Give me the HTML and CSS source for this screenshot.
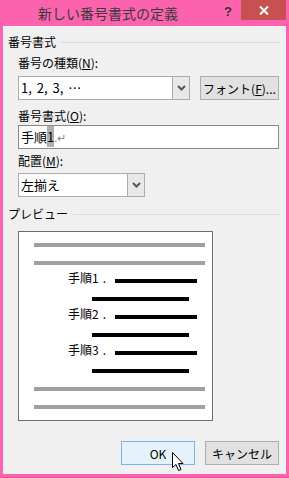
FILE: index.html
```html
<!DOCTYPE html>
<html lang="ja">
<head>
    <meta charset="UTF-8">
    <title>新しい番号書式の定義</title>
    <link rel="stylesheet" href="styles.css">
</head>
<body>
<div class="window">
    <div class="titlebar">
        <span class="title">新しい番号書式の定義</span>
        <span class="help">?</span>
        <span class="close">
            <svg width="10" height="9" viewBox="0 0 10 9"><path d="M1 0.5 L9 8.5 M9 0.5 L1 8.5" stroke="#fff" stroke-width="2"/></svg>
        </span>
    </div>
    <div class="body">
        <div class="group-title">番号書式</div>
        <div class="group">
            <div class="label first">番号の種類(<u>N</u>):</div>
            <div class="row">
                <div class="combo combo-wide">
                    <span class="combo-text">1, 2, 3, …</span>
                    <span class="combo-arrow">
                        <svg width="9" height="6" viewBox="0 0 9 6"><path d="M1 1 L4.5 4.5 L8 1" fill="none" stroke="#555" stroke-width="2"/></svg>
                    </span>
                </div>
                <button class="btn btn-font">フォント(<u>F</u>)...</button>
            </div>
            <div class="label second">番号書式(<u>O</u>):</div>
            <div class="textbox">手順<span class="sel">1</span><span class="mark">.↵</span></div>
            <div class="label third">配置(<u>M</u>):</div>
            <div class="combo combo-narrow">
                <span class="combo-text">左揃え</span>
                <span class="combo-arrow">
                    <svg width="9" height="6" viewBox="0 0 9 6"><path d="M1 1 L4.5 4.5 L8 1" fill="none" stroke="#555" stroke-width="2"/></svg>
                </span>
            </div>
        </div>
        <div class="group-title preview-title">プレビュー</div>
        <div class="preview">
            <div class="line"><span class="bar gray"></span></div>
            <div class="line"><span class="bar gray"></span></div>
            <div class="line step"><span class="step-label">手順1<span class="dot">.</span></span><span class="bar black"></span></div>
            <div class="line"><span class="bar black sub"></span></div>
            <div class="line step"><span class="step-label">手順2<span class="dot">.</span></span><span class="bar black"></span></div>
            <div class="line"><span class="bar black sub"></span></div>
            <div class="line step"><span class="step-label">手順3<span class="dot">.</span></span><span class="bar black"></span></div>
            <div class="line"><span class="bar black sub"></span></div>
            <div class="line"><span class="bar gray"></span></div>
            <div class="line"><span class="bar gray"></span></div>
        </div>
        <div class="actions">
            <button class="btn btn-ok">OK</button>
            <button class="btn btn-cancel">キャンセル</button>
        </div>
    </div>
    <svg class="cursor" width="13" height="20" viewBox="0 0 13 20">
        <path d="M0.5 0.5 L0.5 15.5 L4 12.5 L6.5 18.5 L9 17.5 L6.5 11.5 L11 11.5 Z" fill="#fff" stroke="#000" stroke-width="1" stroke-linejoin="miter"/>
    </svg>
</div>
</body>
</html>
```

FILE: styles.css
```css
* {
    box-sizing: border-box;
}

body {
    margin: 0;
    font-family: "Noto Sans CJK JP", "Noto Sans", sans-serif;
    font-size: 12px;
    color: #000;
}

.window {
    position: relative;
    width: 289px;
    height: 478px;
    background-color: #fc63ae;
    border-bottom: 1px solid #e2519a;
    display: flex;
    flex-direction: column;
}

.titlebar {
    height: 26px;
    display: flex;
    align-items: flex-start;
    flex-shrink: 0;
}

.title {
    margin: 3px 0 0 38px;
    font-size: 14px;
    line-height: 20px;
    color: #3a3a3a;
}

.help {
    margin: 4px 9px 0 auto;
    font-family: "Liberation Sans", sans-serif;
    font-weight: bold;
    font-size: 13px;
    line-height: 16px;
    color: #333;
}

.close {
    width: 45px;
    height: 20px;
    margin-right: 3px;
    background-color: #c75050;
    display: flex;
    align-items: center;
    justify-content: center;
}

.body {
    flex: 1;
    margin: 0 3px 3px 3px;
    background-color: #f0f0f0;
    padding: 8px 7px 0 5px;
}

.group-title {
    display: flex;
    align-items: center;
    height: 16px;
    line-height: 16px;
    margin-right: -1px;
}

.group-title::after {
    content: "";
    flex: 1;
    margin-left: 5px;
    border-top: 1px solid #dcdcdc;
    margin-top: 1px;
}

.preview-title {
    margin-top: 9px;
}

.group {
    padding-left: 10px;
}

.label {
    height: 16px;
    line-height: 16px;
}

.label.first {
    margin-top: 5px;
}

.label.second {
    margin-top: 8px;
}

.label.third {
    margin-top: 4px;
}

.row {
    display: flex;
    margin-top: 5px;
}

.combo {
    height: 24px;
    border: 1px solid #acacac;
    background-color: #fff;
    display: flex;
}

.combo-wide {
    width: 172px;
}

.combo-narrow {
    width: 127px;
    margin-top: 4px;
}

.combo-text {
    flex: 1;
    padding-left: 2px;
    font-size: 13px;
    line-height: 22px;
}

.combo-wide .combo-text {
    word-spacing: 2px;
}

.combo-arrow {
    width: 17px;
    border-left: 1px solid #acacac;
    background-color: #e8e8e8;
    display: flex;
    align-items: center;
    justify-content: center;
}

.btn {
    font-family: "Noto Sans CJK JP", "Noto Sans", sans-serif;
    font-size: 12px;
    color: #000;
    height: 24px;
    padding: 0;
    border: 1px solid #adadad;
    background-color: #e1e1e1;
}

.btn-font {
    width: 79px;
    margin-left: 10px;
}

.textbox {
    margin-top: 1px;
    width: 261px;
    height: 24px;
    border: 1px solid #8a8a8a;
    background-color: #fff;
    padding-left: 2px;
    font-size: 13px;
    line-height: 22px;
}

.textbox .sel {
    background-color: #b0b0b0;
    padding: 1px 0;
}

.textbox .mark {
    color: #8a8a8a;
    font-size: 11px;
}

.preview {
    margin: 9px 0 0 10px;
    width: 195px;
    height: 190px;
    border: 1px solid #6e6e6e;
    background-color: #fff;
    padding: 4px 0;
}

.line {
    height: 18px;
    display: flex;
    align-items: center;
}

.bar {
    height: 4px;
}

.bar.gray {
    margin-left: 15px;
    width: 171px;
    background-color: #a0a0a0;
}

.bar.black {
    width: 82px;
    background-color: #000;
}

.bar.sub {
    margin-left: 73px;
    width: 97px;
}

.step {
    padding-left: 49px;
}

.step-label {
    align-self: flex-start;
    width: 47px;
    font-size: 12px;
    line-height: 12px;
}

.step-label .dot {
    margin-left: 4px;
}

.actions {
    margin-top: 20px;
    display: flex;
    justify-content: flex-end;
    gap: 10px;
}

.btn-ok {
    width: 74px;
    background-color: #e5f1fb;
    border-color: #7eb4ea;
}

.btn-cancel {
    width: 74px;
}

.cursor {
    position: absolute;
    left: 172px;
    top: 452px;
}
```
